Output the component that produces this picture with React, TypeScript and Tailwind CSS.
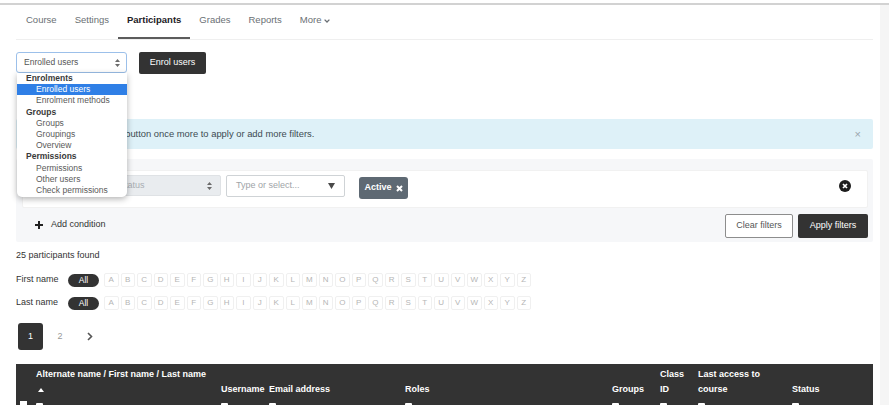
import React from "react";

const tabs = ["Course", "Settings", "Participants", "Grades", "Reports"];
const letters = "ABCDEFGHIJKLMNOPQRSTUVWXYZ".split("");

const menu: { label: string; group?: boolean; selected?: boolean }[] = [
  { label: "Enrolments", group: true },
  { label: "Enrolled users", selected: true },
  { label: "Enrolment methods" },
  { label: "Groups", group: true },
  { label: "Groups" },
  { label: "Groupings" },
  { label: "Overview" },
  { label: "Permissions", group: true },
  { label: "Permissions" },
  { label: "Other users" },
  { label: "Check permissions" },
];

function UpDown() {
  return (
    <svg width="5" height="8" viewBox="0 0 5 8">
      <path d="M2.5 0L5 3H0Z M2.5 8L5 5H0Z" fill="#6b6b6b" />
    </svg>
  );
}

function Dash() {
  return (
    <div className="h-[15px] flex items-center">
      <span className="w-[7px] h-[3px] bg-white rounded-[1px]" />
    </div>
  );
}

function LetterRow({ label }: { label: string }) {
  return (
    <div className="flex items-center h-[14px]">
      <span className="w-[52px] text-[9px] text-[#333]">{label}</span>
      <span className="w-[31px] h-[13px] rounded-full bg-[#333] text-white text-[8.5px] flex items-center justify-center">
        All
      </span>
      <div className="flex gap-[2px] ml-[5px]">
        {letters.map((l) => (
          <span
            key={l}
            className="w-[14.5px] h-[14px] border border-[#f0f0f0] rounded-[2px] flex items-center justify-center text-[8px] text-[#b5b5b5]"
          >
            {l}
          </span>
        ))}
      </div>
    </div>
  );
}

export default function App() {
  return (
    <div className="w-[889px] bg-white font-['Liberation_Sans',Arial,sans-serif] text-[#333]">
      <div className="pt-[3px]">
        <div className="h-[2px] bg-[#d2d2d2]" />
      </div>
      <div className="flex">
        <main className="flex-1 pl-4 pr-[7px] pb-10">
          {/* tabs */}
          <nav className="flex border-b border-[#efefef] pl-px">
            {tabs.map((t) => (
              <div
                key={t}
                className={
                  t === "Participants"
                    ? "px-[9px] h-[34px] pt-[9px] text-[9.5px] leading-[12px] font-bold text-[#1d2125] border-b-2 border-[#5c5c5c]"
                    : "px-[9px] h-[34px] pt-[9px] text-[9.5px] leading-[12px] text-[#6a6f74]"
                }
              >
                {t}
              </div>
            ))}
            <div className="px-[9px] h-[34px] pt-[9px] text-[9.5px] leading-[12px] text-[#6a6f74] flex items-start gap-[3px]">
              More
              <svg width="6" height="4" viewBox="0 0 6 4" className="mt-[5px]">
                <path d="M0.6 0.6L3 3L5.4 0.6" stroke="#6a6f74" strokeWidth="1.3" fill="none" />
              </svg>
            </div>
          </nav>

          {/* select + enrol */}
          <div className="relative mt-[12px] flex items-start gap-[12px]">
            <div className="w-[111px] h-[21px] border border-[#9cc0ea] rounded-[3px] flex items-center justify-between pl-[7px] pr-[6px] text-[8.5px] text-[#555]">
              Enrolled users
              <UpDown />
            </div>
            <button className="w-[67px] h-[22px] bg-[#333] text-white text-[9px] rounded-[2px]">
              Enrol users
            </button>
            <div className="absolute left-[1px] top-[21px] w-[110px] bg-white rounded-b-[5px] shadow-[0_2px_6px_rgba(0,0,0,0.3)] z-10 pb-[1px] text-[8.5px]">
              {menu.map((m, i) => (
                <div
                  key={i}
                  className={
                    m.group
                      ? "leading-[11.2px] h-[11.2px] pl-[9px] font-bold text-[#3a3a3a]"
                      : m.selected
                      ? "leading-[11.2px] h-[11.2px] pl-[19px] bg-[#2f7fe6] text-white"
                      : "leading-[11.2px] h-[11.2px] pl-[19px] text-[#5a5a5a]"
                  }
                >
                  {m.label}
                </div>
              ))}
            </div>
          </div>

          {/* alert */}
          <div className="mt-[45px] h-[30px] bg-[#def1f8] rounded-[2px] flex items-center justify-between pl-[16px] pr-[12px]">
            <span className="text-[9.4px] text-[#3d4b52]">
              Click the 'Apply filters' button once more to apply or add more filters.
            </span>
            <span className="text-[11px] text-[#9aa6ad]">×</span>
          </div>

          {/* filter panel */}
          <div className="mt-[10px] h-[83px] bg-[#f6f7f9] rounded-[2px] pl-[6px] pr-[5px] pt-[11px]">
            <div className="h-[38px] bg-white border border-[#f1f1f1] rounded-[2px] flex items-start pt-[4px] pl-[12px] pr-[16px]">
              <span className="w-[62px] h-[21px] mr-[13px] text-[9px] leading-[21px] text-[#555]">Match Any</span>
              <div className="w-[111px] h-[21px] bg-[#e9ecef] border border-[#dfe2e5] rounded-[2px] flex items-center justify-between pl-[8px] pr-[8px] text-[9px] text-[#a8adb2]">
                Status
                <UpDown />
              </div>
              <div className="ml-[5px] w-[119px] h-[22px] bg-white border border-[#cfd3d6] rounded-[2px] flex items-center justify-between pl-[9px] pr-[9px] text-[9px] text-[#a0a4a8]">
                Type or select...
                <svg width="7" height="6" viewBox="0 0 7 6">
                  <path d="M0 0H7L3.5 6Z" fill="#4a4a4a" />
                </svg>
              </div>
              <div className="ml-[14px] mt-[2px] w-[49px] h-[22px] bg-[#5e6973] rounded-[3px] flex items-center justify-center gap-[4px] text-white text-[9px] font-bold">
                Active
                <svg width="7" height="7" viewBox="0 0 7 7">
                  <path d="M1 1L6 6M6 1L1 6" stroke="#fff" strokeWidth="2" />
                </svg>
              </div>
              <svg width="12" height="12" viewBox="0 0 12 12" className="ml-auto mt-[5px]">
                <circle cx="6" cy="6" r="6" fill="#1c1c1c" />
                <path d="M4 4L8 8M8 4L4 8" stroke="#fff" strokeWidth="1.7" />
              </svg>
            </div>
            <div className="h-[34px] flex items-center justify-between pl-[13px]">
              <div className="flex items-center gap-[8px] text-[9px] text-[#333]">
                <svg width="8" height="8" viewBox="0 0 8 8">
                  <path d="M4 0V8M0 4H8" stroke="#222" strokeWidth="2" />
                </svg>
                Add condition
              </div>
              <div className="flex gap-[5px] mt-[2px]">
                <button className="w-[68px] h-[24px] bg-white border border-[#8d8d8d] rounded-[2px] text-[9px] text-[#555]">
                  Clear filters
                </button>
                <button className="w-[70px] h-[24px] bg-[#333] rounded-[2px] text-[9px] text-white">
                  Apply filters
                </button>
              </div>
            </div>
          </div>

          <div className="mt-[7px] text-[9px] leading-[12px] text-[#333]">25 participants found</div>
          <div className="mt-[12px]">
            <LetterRow label="First name" />
          </div>
          <div className="mt-[9px]">
            <LetterRow label="Last name" />
          </div>

          {/* pagination */}
          <div className="mt-[13px] flex items-center">
            <span className="ml-[2px] w-[25px] h-[27px] bg-[#333] rounded-[3px] text-white text-[9px] flex items-center justify-center">
              1
            </span>
            <span className="ml-[14px] w-[6px] text-[9px] text-[#999] text-center">2</span>
            <svg width="6" height="9" viewBox="0 0 6 9" className="ml-[24px]">
              <path d="M1 1L4.5 4.5L1 8" stroke="#555" strokeWidth="1.6" fill="none" />
            </svg>
          </div>

          {/* table */}
          <table className="mt-[14px] w-full table-fixed border-collapse bg-[#333] text-white">
            <colgroup>
              <col className="w-[16px]" />
              <col className="w-[185px]" />
              <col className="w-[48px]" />
              <col className="w-[136px]" />
              <col className="w-[207px]" />
              <col className="w-[48px]" />
              <col className="w-[38px]" />
              <col className="w-[94px]" />
              <col className="w-[85px]" />
            </colgroup>
            <thead>
              <tr className="text-[9px] leading-[15px] font-bold text-left">
                <th className="align-bottom pl-[4px] pt-[3px]">
                  <div className="h-[15px] flex items-center">
                    <span className="w-[7px] h-[7px] bg-white" />
                  </div>
                </th>
                <th className="align-bottom pl-[4px] pt-[3px] text-left">
                  <div>Alternate name / First name / Last name</div>
                  <div className="h-[15px] flex items-center pl-[2px]">
                    <svg width="6" height="4" viewBox="0 0 6 4">
                      <path d="M0 4L3 0L6 4Z" fill="#fff" />
                    </svg>
                  </div>
                  <Dash />
                </th>
                <th className="align-bottom pl-[4px] pt-[3px] text-left">
                  <div>Username</div>
                  <Dash />
                </th>
                <th className="align-bottom pl-[4px] pt-[3px] text-left">
                  <div>Email address</div>
                  <Dash />
                </th>
                <th className="align-bottom pl-[4px] pt-[3px] text-left">
                  <div>Roles</div>
                  <Dash />
                </th>
                <th className="align-bottom pl-[4px] pt-[3px] text-left">
                  <div>Groups</div>
                  <Dash />
                </th>
                <th className="align-bottom pl-[4px] pt-[3px] text-left">
                  <div>
                    Class
                    <br />
                    ID
                  </div>
                  <Dash />
                </th>
                <th className="align-bottom pl-[4px] pt-[3px] text-left">
                  <div>
                    Last access to
                    <br />
                    course
                  </div>
                  <Dash />
                </th>
                <th className="align-bottom pl-[4px] pt-[3px] text-left">
                  <div>Status</div>
                  <Dash />
                </th>
              </tr>
            </thead>
          </table>
        </main>
        <div className="w-[9px] bg-[#f5f5f5]" />
      </div>
    </div>
  );
}
